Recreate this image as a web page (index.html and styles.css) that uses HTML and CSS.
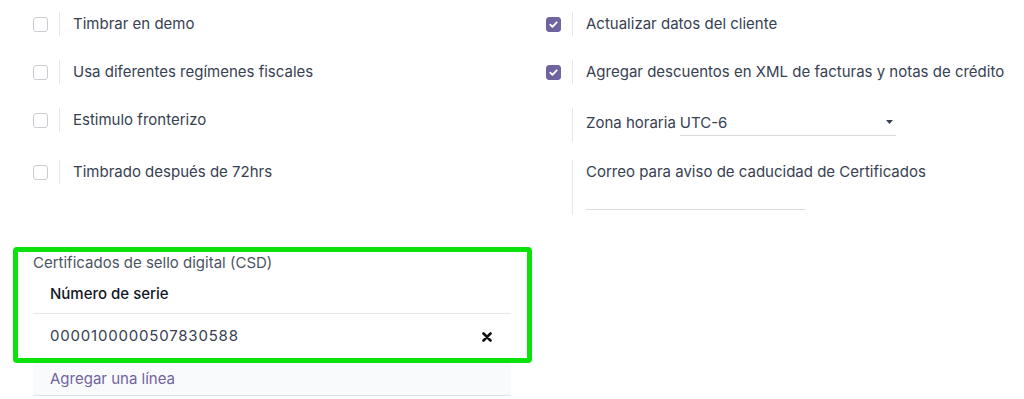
FILE: index.html
```html
<!DOCTYPE html>
<html lang="es">
<head>
  <meta charset="UTF-8" />
  <meta name="viewport" content="width=device-width, initial-scale=1.0"/>
  <title>Ajustes de facturación</title>
  <link rel="stylesheet" href="styles.css">
</head>
<body>

  <div class="settings">
    <div class="setting-row">
      <div class="setting">
        <div class="setting-check"><span class="checkbox"></span></div>
        <div class="setting-body">Timbrar en demo</div>
      </div>
      <div class="setting">
        <div class="setting-check"><span class="checkbox checked">
          <svg viewBox="0 0 15 15" width="15" height="15"><path d="M4.3 7.7l2.1 2.1 4.3-4.5" fill="none" stroke="#fff" stroke-width="1.8" stroke-linecap="round" stroke-linejoin="round"/></svg>
        </span></div>
        <div class="setting-body">Actualizar datos del cliente</div>
      </div>
    </div>

    <div class="setting-row">
      <div class="setting">
        <div class="setting-check"><span class="checkbox"></span></div>
        <div class="setting-body">Usa diferentes regímenes fiscales</div>
      </div>
      <div class="setting">
        <div class="setting-check"><span class="checkbox checked">
          <svg viewBox="0 0 15 15" width="15" height="15"><path d="M4.3 7.7l2.1 2.1 4.3-4.5" fill="none" stroke="#fff" stroke-width="1.8" stroke-linecap="round" stroke-linejoin="round"/></svg>
        </span></div>
        <div class="setting-body">Agregar descuentos en XML de facturas y notas de crédito</div>
      </div>
    </div>

    <div class="setting-row">
      <div class="setting">
        <div class="setting-check"><span class="checkbox"></span></div>
        <div class="setting-body">Estimulo fronterizo</div>
      </div>
      <div class="setting">
        <div class="setting-check"></div>
        <div class="setting-body field-inline">
          <span>Zona horaria</span>
          <div class="select">
            <span>UTC-6</span>
            <svg class="caret" viewBox="0 0 7 4" width="7" height="4"><path d="M0 0h7L3.5 4z" fill="#374151"/></svg>
          </div>
        </div>
      </div>
    </div>

    <div class="setting-row tight">
      <div class="setting">
        <div class="setting-check"><span class="checkbox"></span></div>
        <div class="setting-body">Timbrado después de 72hrs</div>
      </div>
      <div class="setting">
        <div class="setting-check"></div>
        <div class="setting-body field-stack">
          <span>Correo para aviso de caducidad de Certificados</span>
          <div class="input"></div>
        </div>
      </div>
    </div>
  </div>

  <div class="csd">
    <div class="highlight">
      <div class="csd-label">Certificados de sello digital (CSD)</div>
      <div class="table-head">Número de serie</div>
      <div class="table-row">
        <span class="serial">0000100000507830588</span>
        <svg class="remove" viewBox="0 0 10 10" width="10" height="10"><path d="M1.5 1.5l7 7M8.5 1.5l-7 7" stroke="#111" stroke-width="2.6" stroke-linecap="round"/></svg>
      </div>
    </div>
    <div class="add-line">Agregar una línea</div>
  </div>

</body>
</html>
```

FILE: styles.css
```css
* {
  box-sizing: border-box;
  margin: 0;
  padding: 0;
}

body {
  background: #fff;
  color: #374151;
  font-family: 'Inter', 'Noto Sans', sans-serif;
  font-size: 15px;
  line-height: 24px;
}

.settings {
  padding: 12px 0 0 33px;
}

.setting-row {
  display: grid;
  grid-template-columns: 513px 1fr;
  align-items: start;
}

.setting-row + .setting-row {
  margin-top: 24px;
}

.setting-row.tight {
  margin-top: 18px;
}

.setting {
  display: flex;
}

.setting-check {
  width: 26px;
  flex-shrink: 0;
  padding-top: 5px;
}

.checkbox {
  display: block;
  width: 15px;
  height: 15px;
  border: 1px solid #c9cdd2;
  border-radius: 3px;
  background: #fff;
}

.checkbox.checked {
  border-color: #71639e;
  background: #71639e;
}

.checkbox svg {
  display: block;
  margin: -1px;
}

.setting-body {
  border-left: 1px solid #e5e7eb;
  padding-left: 13px;
  white-space: nowrap;
}

.field-inline {
  display: flex;
  padding-top: 3px;
  padding-bottom: 6px;
}

.select {
  display: flex;
  align-items: center;
  justify-content: space-between;
  width: 216px;
  margin-left: 4px;
  border-bottom: 1px solid #d8dadd;
}

.caret {
  margin-right: 3px;
  margin-top: -3px;
}

.field-stack {
  padding-bottom: 5px;
}

.input {
  width: 219px;
  height: 26px;
  border-bottom: 1px solid #d8dadd;
}

.csd {
  margin: 32px 0 0 13px;
}

.highlight {
  width: 519px;
  border: 5px solid #0be20b;
  border-radius: 4px;
  padding: 0 16px 0 15px;
}

.csd-label {
  line-height: 22px;
  color: #4b5563;
}

.table-head {
  height: 40px;
  line-height: 40px;
  padding-left: 17px;
  color: #111827;
  font-weight: 500;
  border-bottom: 1px solid #e5e7eb;
}

.table-row {
  display: flex;
  align-items: center;
  justify-content: space-between;
  height: 44px;
  padding: 0 19px 0 17px;
  color: #374151;
}

.serial {
  letter-spacing: 0.8px;
}

.remove {
  margin-top: 2px;
}

.add-line {
  width: 478px;
  height: 33px;
  margin-left: 20px;
  padding-left: 17px;
  line-height: 31px;
  background: #f9fafb;
  border-bottom: 1px solid #dee2e6;
  color: #71639e;
}
```
